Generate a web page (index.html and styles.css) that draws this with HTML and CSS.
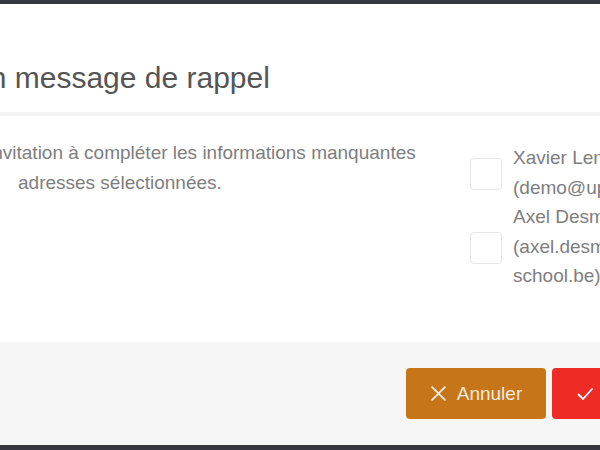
FILE: index.html
```html
<!DOCTYPE html>
<html lang="fr">
<head>
<meta charset="utf-8">
<title>Envoyer un message de rappel</title>
<link rel="stylesheet" href="styles.css">
</head>
<body>
<div class="modal">
  <div class="modal-header">
    <h2 class="modal-title">un message de rappel</h2>
  </div>
  <div class="modal-body">
    <p class="intro"><span class="intro-line">invitation à compléter les informations manquantes</span><span class="intro-line intro-cont">adresses sélectionnées.</span></p>
    <div class="recipients">
      <label class="recipient">
        <span class="checkbox"></span>
        <span class="recipient-name">Xavier Lemaire (demo@upbox.be)</span>
      </label>
      <label class="recipient">
        <span class="checkbox"></span>
        <span class="recipient-name">Axel Desmet (axel.desmet@up-school.be)</span>
      </label>
    </div>
  </div>
  <div class="modal-footer">
    <button class="btn btn-cancel" type="button">
      <svg class="icon" viewBox="0 0 16 16" width="17" height="17" aria-hidden="true"><path d="M2 2 L14 14 M14 2 L2 14" fill="none" stroke="currentColor" stroke-width="1.7" stroke-linecap="round"/></svg>
      <span>Annuler</span>
    </button>
    <button class="btn btn-send" type="button">
      <svg class="icon" viewBox="0 0 16 16" width="16" height="16" aria-hidden="true"><path d="M1.5 8.5 L6 13 L15 3" fill="none" stroke="currentColor" stroke-width="1.8" stroke-linecap="round" stroke-linejoin="round"/></svg>
      <span>Envoyer</span>
    </button>
  </div>
</div>
</body>
</html>
```

FILE: styles.css
```css
html, body {
  margin: 0;
  padding: 0;
}
body {
  width: 600px;
  height: 450px;
  overflow: hidden;
  background: #34373f;
  font-family: "Liberation Sans", Arial, Helvetica, sans-serif;
}
.modal {
  margin-top: 4px;
  margin-left: -40px;
  width: 747px;
  height: 441px;
  background: #ffffff;
  display: flex;
  flex-direction: column;
}
.modal-header {
  height: 112px;
  box-sizing: border-box;
  padding: 56px 0 0 13px;
  border-bottom: 4px solid #f4f4f4;
  flex: none;
}
.modal-title {
  margin: 0;
  font-size: 30px;
  font-weight: normal;
  line-height: 35px;
  color: #555555;
  white-space: nowrap;
}
.modal-body {
  flex: none;
  height: 226px;
  box-sizing: border-box;
  padding: 22px 0 0 28px;
  display: flex;
  align-items: flex-start;
}
.intro {
  margin: 0;
  width: 440px;
  flex: none;
  font-size: 19px;
  line-height: 30px;
  color: #7e7e7e;
}
.intro-line {
  display: block;
  white-space: nowrap;
}
.intro-cont {
  padding-left: 30px;
}
.recipients {
  margin: 5px 0 0 42px;
  display: flex;
  flex-direction: column;
}
.recipient {
  display: flex;
  align-items: center;
  gap: 11px;
}
.checkbox {
  flex: none;
  width: 32px;
  height: 32px;
  box-sizing: border-box;
  margin-top: 3px;
  border: 1px solid #e6e6e6;
  border-radius: 4px;
  background: #fff;
}
.recipient-name {
  width: 165px;
  font-size: 19px;
  line-height: 29.5px;
  color: #7e7e7e;
}
.modal-footer {
  flex: 1;
  background: #f6f6f6;
  display: flex;
  justify-content: flex-end;
  align-items: flex-start;
  gap: 6px;
  padding: 26px 15px 0 0;
}
.btn {
  width: 140px;
  height: 51px;
  border: none;
  border-radius: 4px;
  display: flex;
  align-items: center;
  justify-content: center;
  gap: 10px;
  font-family: inherit;
  font-size: 19px;
  color: rgba(255, 255, 255, 0.86);
  padding: 0;
}
.btn-cancel {
  background: #c67619;
}
.btn-send {
  background: #ee2b25;
  color: #fff;
  justify-content: flex-start;
  padding-left: 25px;
}
.icon {
  flex: none;
  display: block;
}
```
